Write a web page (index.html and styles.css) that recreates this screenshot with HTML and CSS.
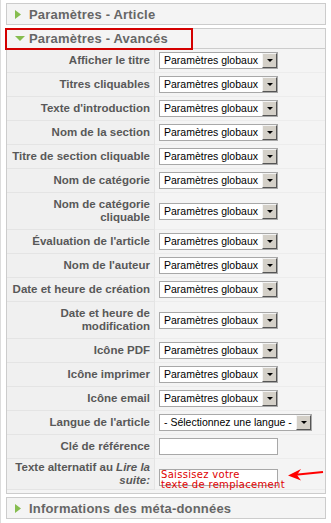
FILE: index.html
```html
<!DOCTYPE html>
<html lang="fr">
<head>
  <meta charset="utf-8">
  <title>Paramètres</title>
  <link rel="stylesheet" href="styles.css">
</head>
<body>

  <div class="page">

    <div class="panel">
      <h3 class="panel-title">
        <svg class="arrow-closed" width="6" height="9" viewBox="0 0 6 9"><polygon points="0,0 6,4.5 0,9" fill="#86bd4f"/></svg>
        Paramètres - Article
      </h3>
    </div>

    <div class="panel">
      <h3 class="panel-title open">
        <svg class="arrow-open" width="10" height="5" viewBox="0 0 10 5"><polygon points="0,0 10,0 5,5" fill="#86bd4f"/></svg>
        Paramètres - Avancés
      </h3>

      <div class="params">
        <div class="row">
          <div class="key"><span>Afficher le titre</span></div>
          <div class="val"><div class="select"><span class="select-text">Paramètres globaux</span><span class="select-btn"></span></div></div>
        </div>
        <div class="row">
          <div class="key"><span>Titres cliquables</span></div>
          <div class="val"><div class="select"><span class="select-text">Paramètres globaux</span><span class="select-btn"></span></div></div>
        </div>
        <div class="row">
          <div class="key"><span>Texte d'introduction</span></div>
          <div class="val"><div class="select"><span class="select-text">Paramètres globaux</span><span class="select-btn"></span></div></div>
        </div>
        <div class="row">
          <div class="key"><span>Nom de la section</span></div>
          <div class="val"><div class="select"><span class="select-text">Paramètres globaux</span><span class="select-btn"></span></div></div>
        </div>
        <div class="row">
          <div class="key"><span>Titre de section cliquable</span></div>
          <div class="val"><div class="select"><span class="select-text">Paramètres globaux</span><span class="select-btn"></span></div></div>
        </div>
        <div class="row">
          <div class="key"><span>Nom de catégorie</span></div>
          <div class="val"><div class="select"><span class="select-text">Paramètres globaux</span><span class="select-btn"></span></div></div>
        </div>
        <div class="row">
          <div class="key"><span>Nom de catégorie<br>cliquable</span></div>
          <div class="val"><div class="select"><span class="select-text">Paramètres globaux</span><span class="select-btn"></span></div></div>
        </div>
        <div class="row">
          <div class="key"><span>Évaluation de l'article</span></div>
          <div class="val"><div class="select"><span class="select-text">Paramètres globaux</span><span class="select-btn"></span></div></div>
        </div>
        <div class="row">
          <div class="key"><span>Nom de l'auteur</span></div>
          <div class="val"><div class="select"><span class="select-text">Paramètres globaux</span><span class="select-btn"></span></div></div>
        </div>
        <div class="row">
          <div class="key"><span>Date et heure de création</span></div>
          <div class="val"><div class="select"><span class="select-text">Paramètres globaux</span><span class="select-btn"></span></div></div>
        </div>
        <div class="row">
          <div class="key"><span>Date et heure de<br>modification</span></div>
          <div class="val"><div class="select"><span class="select-text">Paramètres globaux</span><span class="select-btn"></span></div></div>
        </div>
        <div class="row">
          <div class="key"><span>Icône PDF</span></div>
          <div class="val"><div class="select"><span class="select-text">Paramètres globaux</span><span class="select-btn"></span></div></div>
        </div>
        <div class="row">
          <div class="key"><span>Icône imprimer</span></div>
          <div class="val"><div class="select"><span class="select-text">Paramètres globaux</span><span class="select-btn"></span></div></div>
        </div>
        <div class="row">
          <div class="key"><span>Icône email</span></div>
          <div class="val"><div class="select"><span class="select-text">Paramètres globaux</span><span class="select-btn"></span></div></div>
        </div>
        <div class="row">
          <div class="key"><span>Langue de l'article</span></div>
          <div class="val"><div class="select wide"><span class="select-text">- Sélectionnez une langue -</span><span class="select-btn"></span></div></div>
        </div>
        <div class="row">
          <div class="key"><span>Clé de référence</span></div>
          <div class="val"><div class="textbox"></div></div>
        </div>
        <div class="row last">
          <div class="key"><span>Texte alternatif au <em>Lire la</em><br><em>suite:</em></span></div>
          <div class="val">
            <div class="textarea">Saissisez votre<br>texte de remplacement</div>
            <svg class="pointer" width="36" height="14" viewBox="0 0 36 14">
              <path d="M5 7 L35 4" stroke="#ff0000" stroke-width="2.2" fill="none"/>
              <polygon points="0,7.5 13,1 9,7 13,12.5" fill="#ff0000"/>
            </svg>
          </div>
        </div>
      </div>
    </div>

    <div class="panel">
      <h3 class="panel-title">
        <svg class="arrow-closed" width="6" height="9" viewBox="0 0 6 9"><polygon points="0,0 6,4.5 0,9" fill="#86bd4f"/></svg>
        Informations des méta-données
      </h3>
    </div>

    <!-- annotation box around the opened panel -->
    <div class="highlight"></div>

  </div>

</body>
</html>
```

FILE: styles.css
```css
body {
  margin: 0;
  background: #fff;
  font-family: "Liberation Sans", Arial, sans-serif;
}

.page {
  position: relative;
  height: 523px;
  box-sizing: border-box;
  border-left: 1px solid #dcdcdc;
  padding: 3px 5px 0 5px;
}

.panel {
  border: 1px solid #cccccc;
  background: #f4f4f4;
  margin-bottom: 3px;
}

.panel-title {
  display: flex;
  align-items: center;
  height: 20px;
  margin: 0;
  padding-left: 8px;
  font-size: 13px;
  letter-spacing: 0.2px;
  font-weight: bold;
  color: #666;
  background: #f4f4f4;
}

.panel-title.open {
  height: 19px;
  border-bottom: 1px solid #cccccc;
}

.arrow-closed {
  margin-right: 8px;
}

.arrow-open {
  margin-right: 4px;
}

.params {
  padding-bottom: 3px;
}

.row {
  display: grid;
  grid-template-columns: 148px 1fr;
}

.key {
  display: flex;
  align-items: center;
  justify-content: flex-end;
  text-align: right;
  padding: 5px 4px 5px 0;
  font-size: 11.5px;
  line-height: 13px;
  font-weight: bold;
  color: #585858;
  background: #f0f0f0;
  border-right: 1px solid #e4e4e4;
  border-bottom: 1px solid #e4e4e4;
  white-space: nowrap;
}

.row.last .key {
  padding-top: 2px;
  padding-bottom: 2px;
}

.val {
  display: flex;
  align-items: center;
  padding: 3px 0 3px 4px;
  border-bottom: 1px solid #ececec;
}

.select {
  display: flex;
  width: 119px;
  height: 17px;
  box-sizing: border-box;
  border: 1px solid #a8a8a8;
  background: #fff;
  font-size: 10.5px;
  color: #000;
}

.select.wide {
  width: 153px;
}

.select-text {
  flex: 1;
  padding-left: 4px;
  line-height: 15px;
  white-space: nowrap;
  overflow: hidden;
}

.select-btn {
  width: 15px;
  box-sizing: border-box;
  background: #d4d0c8;
  border: 1px solid;
  border-color: #f4f4f4 #555 #555 #f4f4f4;
  display: flex;
  align-items: center;
  justify-content: center;
}

.select-btn::after {
  content: "";
  border-left: 3px solid transparent;
  border-right: 3px solid transparent;
  border-top: 3px solid #000;
}

.textbox {
  width: 119px;
  height: 17px;
  box-sizing: border-box;
  border: 1px solid #a8a8a8;
  background: #fff;
}

.textarea {
  width: 119px;
  height: 17px;
  box-sizing: border-box;
  border: 1px solid #a8a8a8;
  background: #fff;
  font-family: "DejaVu Sans", Verdana, sans-serif;
  font-size: 10px;
  line-height: 10px;
  letter-spacing: 0.3px;
  color: #e00000;
  white-space: nowrap;
  padding-left: 1px;
  margin-top: 6px;
}

.pointer {
  margin-left: 10px;
  margin-top: 2px;
}

.highlight {
  position: absolute;
  left: 4px;
  top: 28px;
  width: 188px;
  height: 22px;
  box-sizing: border-box;
  border: 2px solid #d40000;
}
```
